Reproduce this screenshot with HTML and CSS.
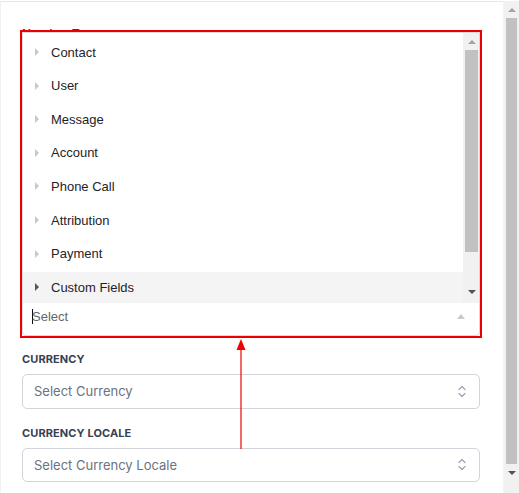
FILE: index.html
```html
<!DOCTYPE html>
<html lang="en">
<head>
<meta charset="utf-8">
<title>Field settings</title>
<link rel="stylesheet" href="styles.css">
</head>
<body>
<div class="page">
  <main class="content">
    <div class="field field-number">
      <div class="label-top">Number Type</div>
      <div class="highlight">
        <div class="panel">
          <div class="menu">
            <ul class="options">
              <li class="opt"><span class="tri"></span>Contact</li>
              <li class="opt"><span class="tri"></span>User</li>
              <li class="opt"><span class="tri"></span>Message</li>
              <li class="opt"><span class="tri"></span>Account</li>
              <li class="opt"><span class="tri"></span>Phone Call</li>
              <li class="opt"><span class="tri"></span>Attribution</li>
              <li class="opt"><span class="tri"></span>Payment</li>
              <li class="opt opt-hover"><span class="tri"></span>Custom Fields</li>
            </ul>
            <div class="vscroll">
              <span class="sbtn"><span class="arr-up"></span></span>
              <span class="thumb"></span>
              <span class="sfill"></span>
              <span class="sbtn sbtn-down"><span class="arr-down"></span></span>
            </div>
          </div>
          <div class="select-input">
            <span class="cursor"></span><span class="ph">Select</span>
            <span class="open-caret"></span>
          </div>
        </div>
      </div>
    </div>

    <div class="field">
      <div class="label">CURRENCY</div>
      <div class="box">
        <span class="box-text">Select Currency</span>
        <svg class="chev" width="8" height="13" viewBox="0 0 8 13"><path d="M1 4.5 L4 1.5 L7 4.5 M1 8.5 L4 11.5 L7 8.5" fill="none" stroke="#9ca3af" stroke-width="1.2" stroke-linecap="round" stroke-linejoin="round"/></svg>
      </div>
    </div>

    <div class="field field-locale">
      <div class="label">CURRENCY LOCALE</div>
      <div class="box">
        <span class="box-text">Select Currency Locale</span>
        <svg class="chev" width="8" height="13" viewBox="0 0 8 13"><path d="M1 4.5 L4 1.5 L7 4.5 M1 8.5 L4 11.5 L7 8.5" fill="none" stroke="#9ca3af" stroke-width="1.2" stroke-linecap="round" stroke-linejoin="round"/></svg>
      </div>
    </div>

    <svg class="annot-arrow" width="12" height="112" viewBox="0 0 12 112">
      <polygon points="6,0 1.5,11 10.5,11" fill="#ee0000"/>
      <line x1="6" y1="10" x2="6" y2="110" stroke="#ee0000" stroke-width="1.2"/>
    </svg>
  </main>
  <aside class="pscroll">
    <span class="pbtn"><span class="arr-up"></span></span>
    <span class="pthumb"></span>
    <span class="pfill"></span>
    <span class="pbtn pbtn-down"><span class="arr-down"></span></span>
  </aside>
</div>
</body>
</html>
```

FILE: styles.css
```css
* { box-sizing: border-box; }
html, body { margin: 0; padding: 0; background: #ffffff; }
body { font-family: "Inter", "Liberation Sans", sans-serif; }

.page {
  width: 519px;
  height: 493px;
  display: flex;
  overflow: hidden;
  position: relative;
  padding-top: 1px;
}

.content {
  flex: 1;
  border-top: 1px solid #e8e8e8;
  border-left: 1px solid #f0f0f0;
  border-right: 1px solid #f4f4f4;
  padding: 21px 21px 0 21px;
  display: flex;
  flex-direction: column;
  position: relative;
}

.field { display: flex; flex-direction: column; }

.label-top {
  font-size: 12px;
  font-weight: 600;
  color: #374151;
  line-height: 16px;
  margin-top: 3px;
  margin-bottom: -12px;
}

.highlight {
  position: relative;
  width: 462px;
  margin-left: -2px;
  border: 2px solid #ee0000;
  background: #fff;
}

.panel {
  background: #fff;
  border: 1px solid #d9d9d9;
  border-radius: 0 0 4px 4px;
}

.menu { display: flex; height: 269px; }

.options {
  list-style: none;
  margin: 0;
  padding: 1px 0 0 0;
  flex: 1;
  overflow: hidden;
  font-family: "Liberation Sans", Arial, sans-serif;
  font-size: 13px;
  color: #1f2328;
}

.opt {
  height: 31px;
  margin-top: 2.6px;
  display: flex;
  align-items: center;
  padding-left: 12px;
}

.opt-hover { background: #f4f4f4; }

.tri {
  width: 0;
  height: 0;
  border-top: 4px solid transparent;
  border-bottom: 4px solid transparent;
  border-left: 4px solid #c8c8c8;
  margin-right: 12px;
}
.opt-hover .tri { border-left-color: #555; }

.vscroll {
  width: 16px;
  background: #f1f1f1;
  display: flex;
  flex-direction: column;
  padding: 0 1px 0 2px;
}
.sbtn {
  height: 17px;
  display: flex;
  align-items: center;
  justify-content: center;
}
.thumb { height: 202px; background: #c1c1c1; }
.sfill { flex: 1; }
.sbtn-down { align-items: flex-start; padding-top: 5px; }

.arr-up {
  width: 0; height: 0;
  border-left: 4px solid transparent;
  border-right: 4px solid transparent;
  border-bottom: 4px solid #a3a3a3;
}
.arr-down {
  width: 0; height: 0;
  border-left: 4px solid transparent;
  border-right: 4px solid transparent;
  border-top: 4px solid #505050;
}

.select-input {
  height: 33px;
  display: flex;
  align-items: center;
  padding-left: 9px;
  padding-bottom: 5px;
  border-top: 1px solid #f2f2f2;
  font-family: "Liberation Sans", Arial, sans-serif;
  font-size: 13px;
  color: #666;
}
.cursor {
  width: 1px;
  height: 15px;
  background: #111;
  margin-right: -1px;
}
.ph { flex: 1; }
.open-caret {
  width: 0; height: 0;
  border-left: 4.5px solid transparent;
  border-right: 4.5px solid transparent;
  border-bottom: 5px solid #c9c9c9;
  margin-right: 14px;
}

.field-number + .field { margin-top: 14px; }
.field-locale { margin-top: 17px; }

.label {
  font-size: 11px;
  font-weight: 700;
  color: #374151;
  line-height: 14px;
  letter-spacing: 0.1px;
  margin-bottom: 8px;
}

.box {
  width: 458px;
  height: 34.5px;
  border: 1px solid #d1d5db;
  border-radius: 5px;
  display: flex;
  align-items: center;
  padding: 0 13px 0 11px;
  background: #fff;
}
.box-text { flex: 1; font-size: 13px; color: #6b7280; }
.chev { display: block; }

.annot-arrow {
  position: absolute;
  left: 234px;
  top: 337px;
}

.pscroll {
  width: 17px;
  background: #f1f1f1;
  display: flex;
  flex-direction: column;
  padding: 0 2px 0 2px;
}
.pbtn {
  height: 17px;
  display: flex;
  align-items: center;
  justify-content: center;
}
.pthumb { height: 446px; background: #c1c1c1; }
.pfill { flex: 1; }
.pbtn-down { height: 29px; align-items: flex-start; padding-top: 7px; }
```
